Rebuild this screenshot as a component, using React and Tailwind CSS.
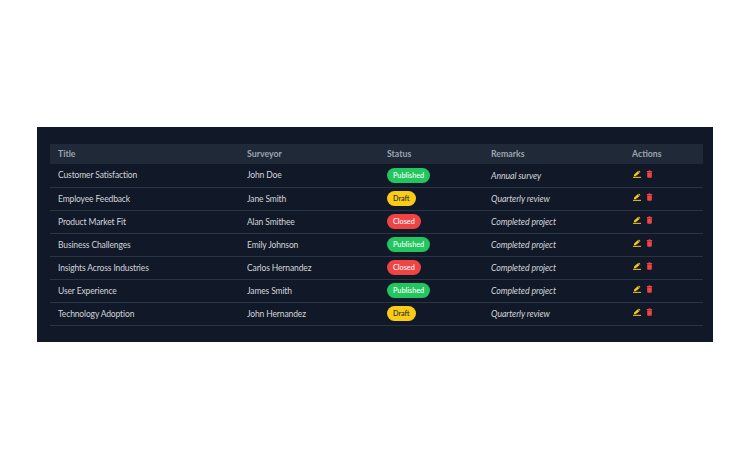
const rows = [
  ["Customer Satisfaction", "John Doe", "Published", "Annual survey"],
  ["Employee Feedback", "Jane Smith", "Draft", "Quarterly review"],
  ["Product Market Fit", "Alan Smithee", "Closed", "Completed project"],
  ["Business Challenges", "Emily Johnson", "Published", "Completed project"],
  ["Insights Across Industries", "Carlos Hernandez", "Closed", "Completed project"],
  ["User Experience", "James Smith", "Published", "Completed project"],
  ["Technology Adoption", "John Hernandez", "Draft", "Quarterly review"],
];
const badge = {
  Published: "bg-[#22c55e] text-white",
  Draft: "bg-[#facc15] text-[#1f2937]",
  Closed: "bg-[#ef4444] text-white",
};
function Pencil() {
  return (
    <svg width="8" height="8" viewBox="0 0 24 24" fill="#facc15">
      <path d="M3 14.5V19h4.5L19 9.5 14 4 3 14.5zM21.5 7.2a1.2 1.2 0 0 0 0-1.7l-3-3a1.2 1.2 0 0 0-1.7 0L15.5 3.5l4.6 5 1.4-1.3z" />
      <rect x="0" y="20.5" width="24" height="3" />
    </svg>
  );
}
function Trash() {
  return (
    <svg width="7" height="8" viewBox="0 0 20 24" fill="#ef4444">
      <path d="M3 7h14v13a3 3 0 0 1-3 3H6a3 3 0 0 1-3-3V7zM2 3h5l1-2h4l1 2h5v3H2V3z" />
    </svg>
  );
}
export default function App() {
  return (
    <div className="w-[750px] h-[469px] bg-white flex items-center font-['Lato','Noto_Sans',sans-serif]">
      <div className="w-full mx-[37px] h-[215px] bg-[#111827] pl-[13px] pr-[10px] pt-[17px]">
        <table className="w-full table-fixed border-collapse text-[8.5px] tracking-[-0.13px] text-[#d1d5db]">
          <thead>
            <tr className="h-[20px] bg-[#1f2937] text-left text-[8.75px] tracking-normal text-[#9ca3af]">
              <th className="w-[189px] pl-2 font-bold">Title</th>
              <th className="w-[140px] pl-2 font-bold">Surveyor</th>
              <th className="w-[104px] pl-2 font-bold">Status</th>
              <th className="w-[141px] pl-2 font-bold">Remarks</th>
              <th className="pl-2 font-bold">Actions</th>
            </tr>
          </thead>
          <tbody>
            {rows.map((r) => (
              <tr key={r[0]} className="h-[23px] border-b border-[#2a3544]">
                <td className="pl-2 pt-[1px]">{r[0]}</td>
                <td className="pl-2 pt-[1px]">{r[1]}</td>
                <td className="pl-2">
                  <span className={"inline-block rounded-full px-[6px] py-[2px] text-[7.25px] leading-[11px] tracking-normal font-medium " + badge[r[2]]}>{r[2]}</span>
                </td>
                <td className="pl-2 pt-[1px] text-[8.75px] tracking-[-0.1px] italic">{r[3]}</td>
                <td className="pl-[9px] pb-[3px]">
                  <div className="flex gap-[5px]"><Pencil /><Trash /></div>
                </td>
              </tr>
            ))}
          </tbody>
        </table>
      </div>
    </div>
  );
}
